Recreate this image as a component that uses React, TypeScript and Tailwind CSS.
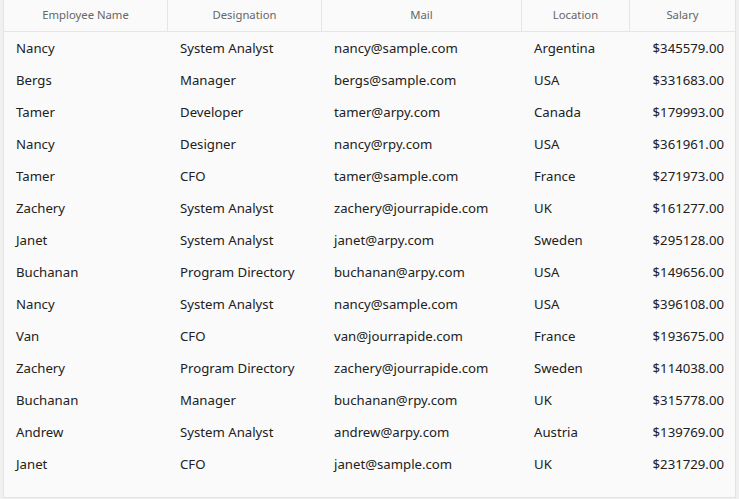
const rows = [
  ['Nancy', 'System Analyst', 'nancy@sample.com', 'Argentina', '$345579.00'],
  ['Bergs', 'Manager', 'bergs@sample.com', 'USA', '$331683.00'],
  ['Tamer', 'Developer', 'tamer@arpy.com', 'Canada', '$179993.00'],
  ['Nancy', 'Designer', 'nancy@rpy.com', 'USA', '$361961.00'],
  ['Tamer', 'CFO', 'tamer@sample.com', 'France', '$271973.00'],
  ['Zachery', 'System Analyst', 'zachery@jourrapide.com', 'UK', '$161277.00'],
  ['Janet', 'System Analyst', 'janet@arpy.com', 'Sweden', '$295128.00'],
  ['Buchanan', 'Program Directory', 'buchanan@arpy.com', 'USA', '$149656.00'],
  ['Nancy', 'System Analyst', 'nancy@sample.com', 'USA', '$396108.00'],
  ['Van', 'CFO', 'van@jourrapide.com', 'France', '$193675.00'],
  ['Zachery', 'Program Directory', 'zachery@jourrapide.com', 'Sweden', '$114038.00'],
  ['Buchanan', 'Manager', 'buchanan@rpy.com', 'UK', '$315778.00'],
  ['Andrew', 'System Analyst', 'andrew@arpy.com', 'Austria', '$139769.00'],
  ['Janet', 'CFO', 'janet@sample.com', 'UK', '$231729.00'],
];

const headers = ['Employee Name', 'Designation', 'Mail', 'Location', 'Salary'];
const widths = ['w-[164px]', 'w-[154px]', 'w-[200px]', 'w-[108px]', 'w-[105px]'];

export default function App() {
  return (
    <div className="w-[739px] h-[499px] bg-[#f0f0f0] pl-[3px] font-['Noto_Sans',sans-serif]">
      <div className="w-[733px] h-[498px] bg-[#fafafa] border-x border-b border-[#e3e3e3] flex flex-col">
        <div className="flex h-[32px] border-b border-[#e6e6e6] text-[11.3px] text-[#666]">
          {headers.map((h, i) => (
            <div
              key={h}
              className={`${widths[i]} flex items-center justify-center pb-[1px] ${i < 4 ? 'border-r border-[#e6e6e6]' : ''}`}
            >
              {h}
            </div>
          ))}
        </div>
        {rows.map((r, ri) => (
          <div key={ri} className="flex h-[32px] pt-[1px] text-[13.2px] text-[#212121]">
            {r.map((c, i) => (
              <div
                key={i}
                className={`${widths[i]} flex items-center ${i === 4 ? 'justify-end pr-[11px]' : 'pl-[12px]'}`}
              >
                {c}
              </div>
            ))}
          </div>
        ))}
      </div>
    </div>
  );
}
